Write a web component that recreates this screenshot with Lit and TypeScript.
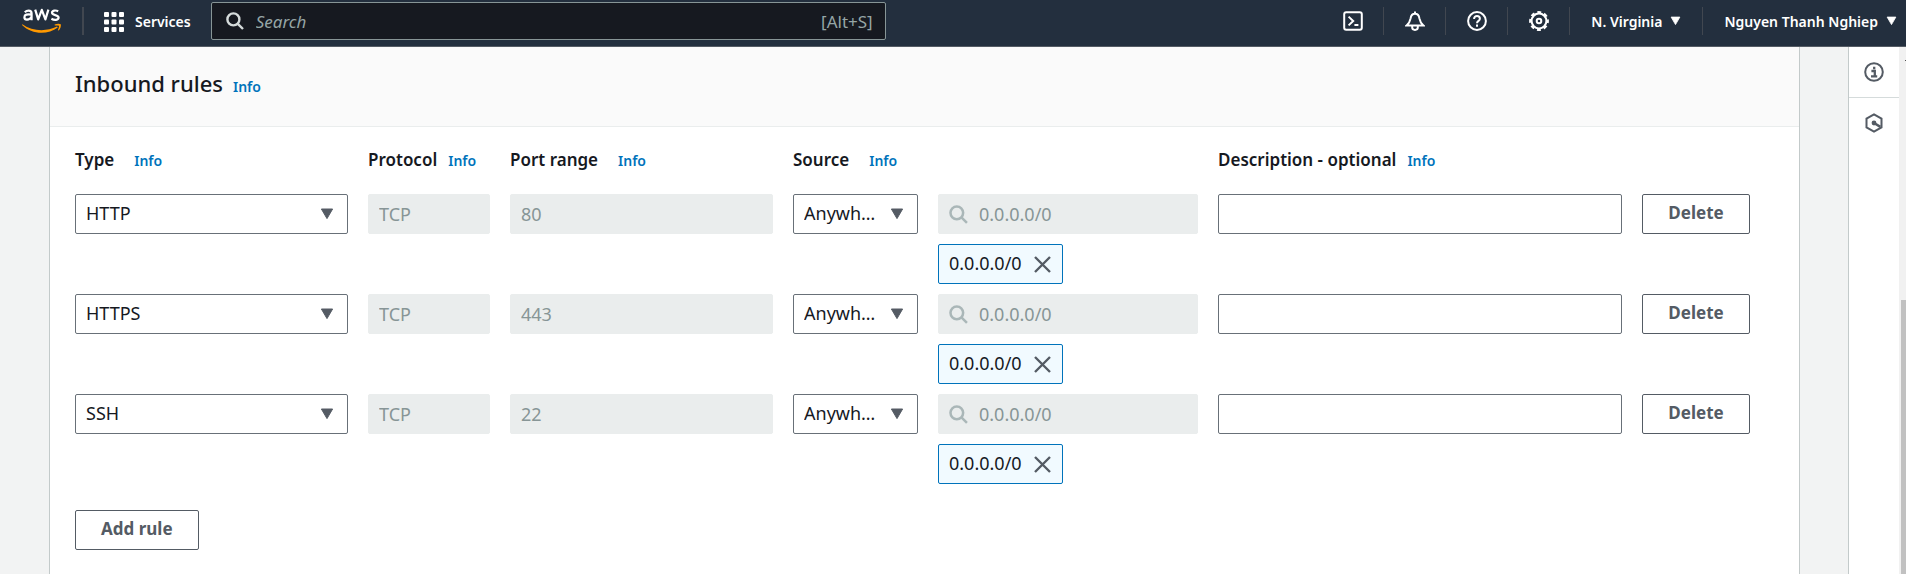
import { LitElement, html, css, svg } from "lit";
import { customElement, state } from "lit/decorators.js";

interface Rule {
  type: string;
  protocol: string;
  port: string;
  source: string;
  cidr: string;
  description: string;
}

const caret = html`<svg class="caret" viewBox="0 0 14 12" aria-hidden="true">
  <path d="M1.4 1h11.2L7 10.6z" fill="currentColor" stroke="currentColor" stroke-linejoin="round" />
</svg>`;

const magnifier = html`<svg class="glass" viewBox="0 0 18 18" aria-hidden="true">
  <circle cx="7.4" cy="7.4" r="6" fill="none" stroke="currentColor" stroke-width="2.4" />
  <path d="M11.8 11.8l5.2 5.2" stroke="currentColor" stroke-width="2.4" />
</svg>`;

const icons = {
  shell: svg`<rect x="1.2" y="1.2" width="17.6" height="17.6" rx="2" /><path d="M5.6 5.6l4.6 4.4-4.6 4.4M11.4 14h4" />`,
  bell: svg`<path d="M10 .4v2.400M1.600 14.400h16.800c-2.400-2-3.400-3.600-4-7C14 4.600 12.300 2.800 10 2.800S6 4.600 5.600 7.400c-.6 3.400-1.600 5-4 7z" /><path d="M7.200 15v1.600c0 1.500 1.100 2.300 2.800 2.300s2.800-.8 2.800-2.300V15" />`,
  help: svg`<circle cx="10" cy="10" r="8.900" /><path d="M7.100 8c0-1.900 1.300-2.900 2.900-2.900s2.900 1.100 2.900 2.600c0 2.200-2.900 2.200-2.900 4.600M10 13.600v2.200" />`,
  gear: svg`<circle cx="10" cy="10" r="7.400" /><circle cx="10" cy="10" r="8.800" stroke-width="2.200" stroke-dasharray="3.900 3.012" stroke-dashoffset="1.950" /><circle cx="10" cy="10" r="2.300" />`,
  info: svg`<circle cx="10" cy="10" r="8.800" /><path d="M7.400 9h3.400v5.400M7 14.400h6.200M10.200 4.800v2.400" stroke-width="2.300" />`,
  hex: svg`<path d="M10 1.300l7.500 4.300v8.800L10 18.700l-7.500-4.300V5.600z" /><circle cx="10" cy="10" r="2.400" fill="currentColor" stroke="none" /><path d="M10 10l6.400 3.800" stroke-width="2.600" />`,
};

const icon = (name: keyof typeof icons) => html`<svg class="icon" viewBox="0 0 20 20" aria-hidden="true">${icons[name]}</svg>`;

const fonts = css`"Noto Sans", "Open Sans", sans-serif`;

@customElement("console-header")
export class ConsoleHeader extends LitElement {
  static styles = css`
    :host {
      display: flex;
      align-items: center;
      height: 46px;
      background: #232f3e;
      border-bottom: 1px solid #545b64;
      color: #fff;
      font-family: ${fonts};
    }
    button {
      font: inherit;
      color: inherit;
      background: none;
      border: 0;
      padding: 0;
      display: flex;
      align-items: center;
    }
    .logo {
      display: flex;
      padding: 0 20px 4px 22px;
    }
    .logo svg {
      width: 40px;
      height: 26px;
    }
    .bar {
      width: 2px;
      height: 28px;
      margin-bottom: 4px;
      background: #414750;
    }
    .services {
      gap: 11px;
      margin: 0 20px 3px 20px;
      font-size: 14px;
      font-weight: 600;
    }
    .services svg {
      width: 20px;
      height: 20px;
    }
    .search {
      display: flex;
      align-items: center;
      box-sizing: border-box;
      flex: 0 1 675px;
      height: 38px;
      margin-bottom: 4px;
      padding: 0 12px 0 14px;
      gap: 12px;
      background: #161920;
      border: 1px solid #879596;
      border-radius: 2px;
      color: #95a5a6;
      font-size: 17px;
    }
    .search input {
      flex: 1;
      min-width: 0;
      padding: 0;
      border: 0;
      outline: 0;
      background: none;
      font: inherit;
      color: inherit;
    }
    .search input::placeholder {
      color: #95a5a6;
      opacity: 1;
      font-style: italic;
    }
    .glass {
      width: 18px;
      height: 18px;
      color: #d5dbdb;
    }
    .tools {
      display: flex;
      align-items: center;
      margin-left: auto;
      padding-bottom: 4px;
      font-size: 14px;
      font-weight: 600;
    }
    .tool {
      height: 28px;
      padding: 0 20px 0 21px;
      border-right: 1px solid #414750;
    }
    .menu {
      height: 28px;
      gap: 8px;
      padding: 0 21px;
      border-right: 1px solid #414750;
      white-space: nowrap;
    }
    .account {
      padding-right: 9px;
      border-right: 0;
    }
    .icon {
      width: 20px;
      height: 20px;
      fill: none;
      stroke: currentColor;
      stroke-width: 2;
    }
    .caret {
      width: 11px;
      height: 10px;
    }
  `;

  render() {
    return html`
      <a class="logo" href="#" aria-label="AWS">
        <svg viewBox="0 0 40 26" aria-hidden="true">
          <g fill="none" stroke="#fff" stroke-width="2.200" stroke-linejoin="round">
            <path d="M2.800 4.200C4 3 5.200 2.600 6.600 2.600c2 0 3 1 3 3v6.600M9.600 6.600c-4.400-.8-7.200 0-7.200 2.600 0 1.600 1.100 2.400 2.600 2.400 2.200 0 3.600-1 4.600-2.800" />
            <path d="M13.200 1.600l3 9.800L19.800 1.800l3.600 9.600 3-9.800" />
            <path d="M36.200 3.200c-2.600-1.300-6.200-.8-6.200 1.600 0 3 6.600 1.600 6.600 4.800 0 2.800-4.400 2.800-7.200 1.200" />
          </g>
          <path d="M.4 16.200C10.400 23.400 24 24 35 18.600l.8 1C25.600 27.200 9.600 26.600 0 17z" fill="#f90" />
          <path d="M32.600 16.600c2.400-1.200 5.200-1 6.200-.4.400 2-.4 4.800-2.200 6.400l-.8-.4c.8-1.600 1.400-3.400 1.200-4.400-1-.4-2.800-.4-4.200-.200z" fill="#f90" />
        </svg>
      </a>
      <span class="bar"></span>
      <button class="services">
        <svg viewBox="0 0 20 20" fill="#fff" aria-hidden="true">
          ${[0, 7.5, 15].map((y) => [0, 7.5, 15].map((x) => svg`<rect x=${x} y=${y} width="5" height="5" rx="1" />`))}
        </svg>
        Services
      </button>
      <label class="search">
        ${magnifier}
        <input type="text" placeholder="Search" aria-label="Search" />
        <span>[Alt+S]</span>
      </label>
      <div class="tools">
        <button class="tool" aria-label="CloudShell">${icon("shell")}</button>
        <button class="tool" aria-label="Notifications">${icon("bell")}</button>
        <button class="tool" aria-label="Help">${icon("help")}</button>
        <button class="tool" aria-label="Settings">${icon("gear")}</button>
        <button class="menu">N. Virginia ${caret}</button>
        <button class="menu account">Nguyen Thanh Nghiep ${caret}</button>
      </div>
    `;
  }
}

@customElement("inbound-rules")
export class InboundRules extends LitElement {
  @state() private rules: Rule[] = [
    { type: "HTTP", protocol: "TCP", port: "80", source: "Anywhere-IPv4", cidr: "0.0.0.0/0", description: "" },
    { type: "HTTPS", protocol: "TCP", port: "443", source: "Anywhere-IPv4", cidr: "0.0.0.0/0", description: "" },
    { type: "SSH", protocol: "TCP", port: "22", source: "Anywhere-IPv4", cidr: "0.0.0.0/0", description: "" },
  ];

  static styles = css`
    :host {
      display: block;
      background: #fff;
      border: 1px solid #c3caca;
      border-width: 0 1px;
      color: #16191f;
      font-family: ${fonts};
      font-size: 17px;
      line-height: 24px;
    }
    .title {
      display: flex;
      align-items: baseline;
      gap: 10px;
      padding: 20px 25px 27px;
      background: #fafafa;
      border-bottom: 1px solid #eaeded;
    }
    h2 {
      margin: 0;
      font-size: 22px;
      line-height: 32px;
      font-weight: 500;
    }
    a {
      color: #0073bb;
      font-size: 14px;
      font-weight: 600;
      text-decoration: none;
    }
    .body {
      padding: 21px 49px 25px 25px;
    }
    .grid {
      display: grid;
      grid-template-columns: 273fr 122fr 263fr 125fr 260fr 404fr 108px;
      align-items: start;
      column-gap: 20px;
      row-gap: 10px;
    }
    .head {
      display: flex;
      align-items: baseline;
      gap: 20px;
      margin-bottom: 11px;
      font-weight: 600;
      white-space: nowrap;
    }
    .tight {
      gap: 11px;
    }
    .wide {
      grid-column: span 2;
    }
    .picker,
    .finder {
      display: grid;
      align-items: center;
    }
    .picker > *,
    .finder > * {
      grid-area: 1 / 1;
    }
    .picker .caret {
      justify-self: end;
      margin-right: 14px;
      width: 14px;
      height: 12px;
      color: #545b64;
      pointer-events: none;
    }
    select,
    input {
      appearance: none;
      box-sizing: border-box;
      width: 100%;
      min-width: 0;
      height: 40px;
      margin: 0;
      padding: 0 10px;
      border: 1px solid #687078;
      border-radius: 2px;
      background: #fff;
      color: inherit;
      font: inherit;
      font-size: 18px;
      opacity: 1;
    }
    select {
      padding: 0 41px 2px 10px;
      text-overflow: ellipsis;
      overflow: hidden;
      white-space: nowrap;
    }
    input:disabled {
      border-color: #eaeded;
      background: #eaeded;
      color: #879596;
    }
    input::placeholder {
      color: #879596;
      opacity: 1;
    }
    .finder input {
      padding-left: 40px;
    }
    .finder .glass {
      width: 19px;
      height: 19px;
      margin-left: 11px;
      color: #aab7b8;
      z-index: 1;
    }
    .source {
      display: flex;
      flex-direction: column;
      align-items: stretch;
      gap: 10px;
    }
    .token {
      display: flex;
      align-items: center;
      align-self: flex-start;
      box-sizing: border-box;
      height: 40px;
      gap: 12px;
      padding: 0 11px 0 10px;
      border: 1px solid #0073bb;
      border-radius: 2px;
      background: #f1faff;
      font-size: 18px;
    }
    .token span {
      padding-bottom: 2px;
    }
    .token button {
      display: flex;
      padding: 0;
      border: 0;
      background: none;
      color: #545b64;
    }
    .token svg {
      width: 17px;
      height: 17px;
      stroke: currentColor;
      stroke-width: 2.4;
    }
    .btn {
      height: 40px;
      padding: 0 25px 2px;
      border: 1px solid #545b64;
      border-radius: 2px;
      background: #fff;
      color: #545b64;
      font: inherit;
      font-weight: 700;
      white-space: nowrap;
    }
    .delete {
      padding: 0 0 2px;
    }
    .add {
      margin-top: 26px;
    }
  `;

  private remove(i: number) {
    this.rules = this.rules.filter((_, n) => n !== i);
  }

  private add() {
    this.rules = [...this.rules, { ...this.rules[0], type: "HTTP", port: "80" }];
  }

  private row(r: Rule, i: number) {
    return html`
      <div class="picker">
        <select aria-labelledby="type"><option>${r.type}</option></select>
        ${caret}
      </div>
      <input type="text" aria-labelledby="protocol" .value=${r.protocol} disabled />
      <input type="text" aria-labelledby="port" .value=${r.port} disabled />
      <div class="picker">
        <select aria-labelledby="source"><option>${r.source}</option></select>
        ${caret}
      </div>
      <div class="source">
        <div class="finder">
          <input type="text" aria-labelledby="source" placeholder=${r.cidr} disabled />
          ${magnifier}
        </div>
        <div class="token">
          <span>${r.cidr}</span>
          <button aria-label="Remove">
            <svg viewBox="0 0 17 17" aria-hidden="true"><path d="M1 1l15 15M16 1L1 16" /></svg>
          </button>
        </div>
      </div>
      <input type="text" aria-labelledby="description" .value=${r.description} />
      <button class="btn delete" @click=${() => this.remove(i)}>Delete</button>
    `;
  }

  render() {
    return html`
      <div class="title"><h2>Inbound rules</h2><a href="#">Info</a></div>
      <div class="body">
        <div class="grid">
          <div class="head"><span id="type">Type</span><a href="#">Info</a></div>
          <div class="head tight"><span id="protocol">Protocol</span><a href="#">Info</a></div>
          <div class="head"><span id="port">Port range</span><a href="#">Info</a></div>
          <div class="head wide"><span id="source">Source</span><a href="#">Info</a></div>
          <div class="head tight wide"><span id="description">Description - optional</span><a href="#">Info</a></div>
          ${this.rules.map((r, i) => this.row(r, i))}
        </div>
        <button class="btn add" @click=${this.add}>Add rule</button>
      </div>
    `;
  }
}

@customElement("app-root")
export class AppRoot extends LitElement {
  static styles = css`
    :host {
      display: flex;
      flex-direction: column;
      height: 100vh;
      overflow: hidden;
      background: #f2f3f3;
    }
    .page {
      display: flex;
      flex: 1;
      min-height: 0;
    }
    main {
      display: flex;
      flex: 1;
      min-width: 0;
      padding: 0 48px 0 49px;
    }
    inbound-rules {
      flex: 1;
    }
    .rail {
      width: 50px;
      background: #fff;
      border-left: 1px solid #c3caca;
    }
    .rail button {
      display: flex;
      align-items: center;
      justify-content: center;
      width: 100%;
      height: 51px;
      padding: 0;
      border: 0;
      border-bottom: 1px solid #d5dbdb;
      background: none;
      color: #545b64;
    }
    .rail button + button {
      border-bottom-color: transparent;
    }
    .icon {
      width: 20px;
      height: 20px;
      fill: none;
      stroke: currentColor;
      stroke-width: 2;
    }
    .track {
      display: flex;
      flex-direction: column;
      align-items: flex-end;
      justify-content: space-between;
      width: 7px;
      background: #f1f1f1;
    }
    .arrow {
      width: 1px;
      height: 1px;
      margin-top: 13px;
      background: #505050;
    }
    .thumb {
      width: 5px;
      height: 52%;
      background: #c1c1c1;
    }
  `;

  render() {
    return html`
      <console-header></console-header>
      <div class="page">
        <main><inbound-rules></inbound-rules></main>
        <aside class="rail">
          <button aria-label="Info">${icon("info")}</button>
          <button aria-label="Diagnostics">${icon("hex")}</button>
        </aside>
        <div class="track"><div class="arrow"></div><div class="thumb"></div></div>
      </div>
    `;
  }
}
